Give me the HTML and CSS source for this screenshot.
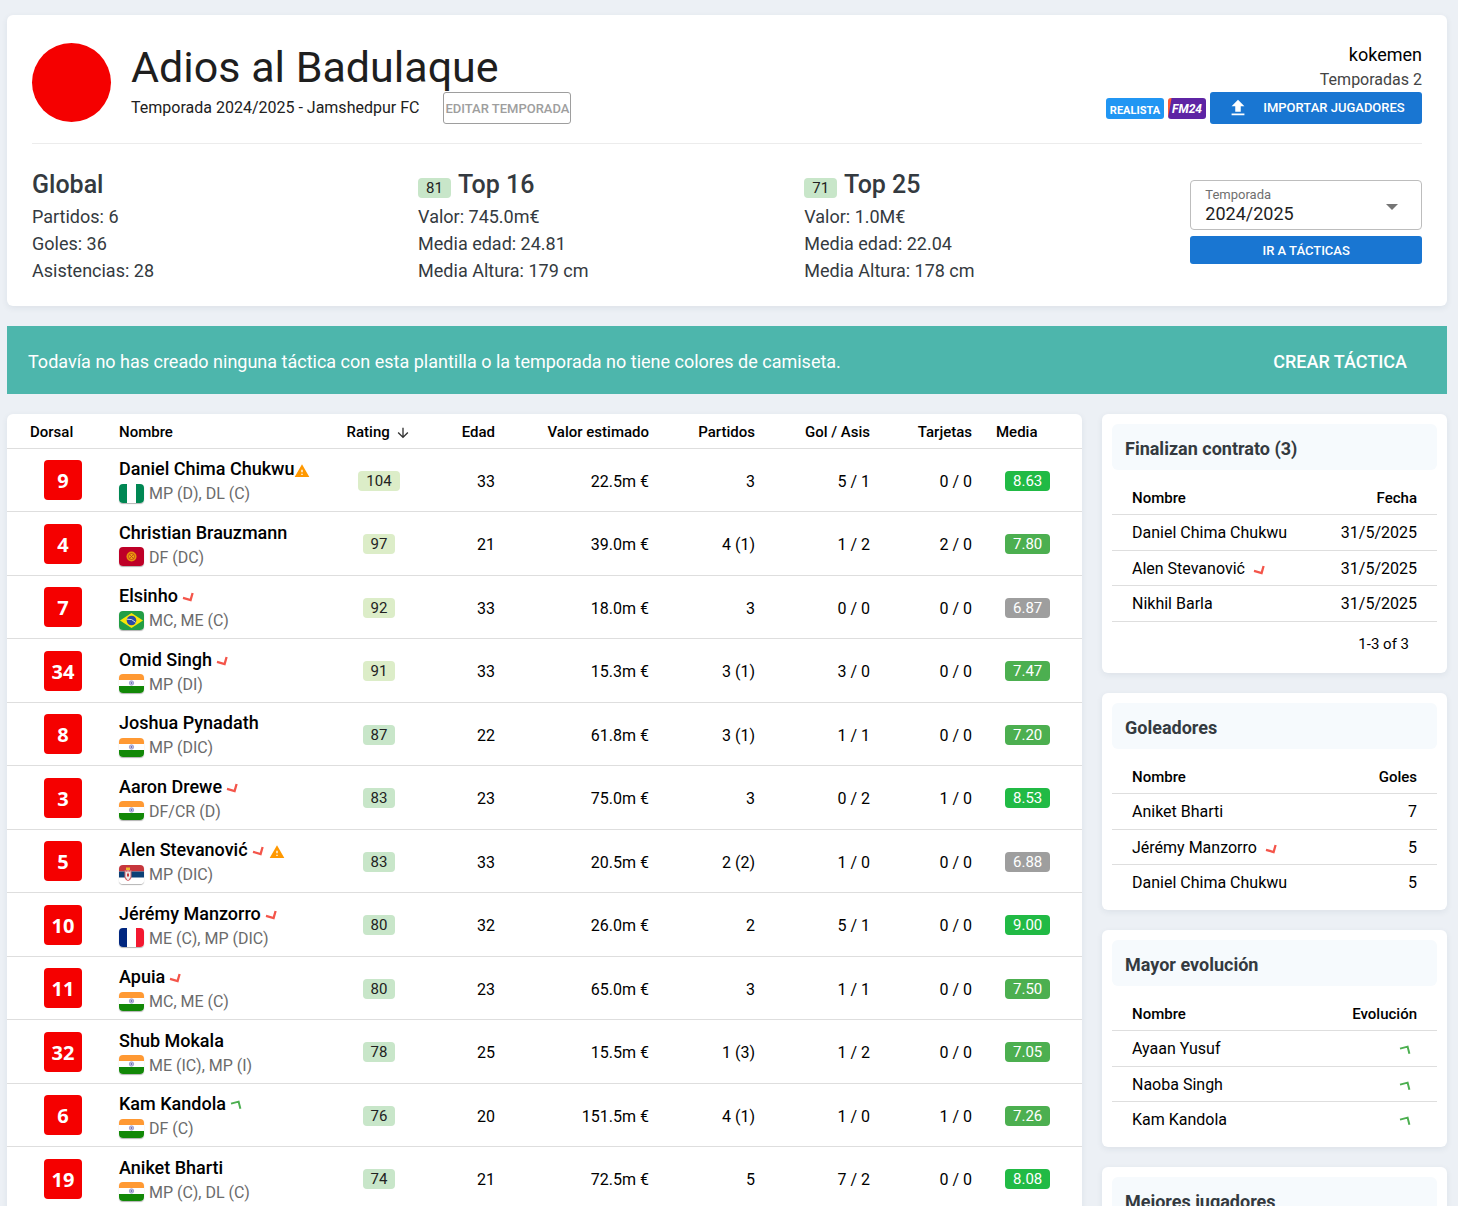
FILE: index.html
```html
<!DOCTYPE html>
<html lang="es">
<head>
<meta charset="utf-8">
<meta name="viewport" content="width=device-width, initial-scale=1">
<title>Adios al Badulaque</title>
<link rel="stylesheet" href="styles.css">
</head>
<body>
<svg class="sprite" aria-hidden="true">
  <symbol id="down" viewBox="0 0 12 12"><path d="M1 6.800l7.600 2.200L10.600 2" fill="none" stroke="#f4554a" stroke-width="2.300"/></symbol>
  <symbol id="up" viewBox="0 0 12 12"><path d="M1 4.600l7.600-2L10.400 9.800" fill="none" stroke="#4caf50" stroke-width="2"/></symbol>
  <symbol id="warn" viewBox="0 0 24 24"><path d="M1 21h22L12 2 1 21zm12-3h-2v-2h2v2zm0-4h-2v-4h2v4z" fill="#ff9800"/></symbol>
  <symbol id="ng" viewBox="0 0 25 19"><path fill="#fff" d="M0 0h25v19H0z"/><path fill="#008753" d="M0 0h8v19H0zM17 0h8v19h-8z"/></symbol>
  <symbol id="fr" viewBox="0 0 25 19"><path fill="#fff" d="M0 0h25v19H0z"/><path fill="#00267f" d="M0 0h8v19H0z"/><path fill="#f31830" d="M17 0h8v19h-8z"/></symbol>
  <symbol id="in" viewBox="0 0 25 19"><path fill="#fff" d="M0 0h25v19H0z"/><path fill="#ff9933" d="M0 0h25v6H0z"/><path fill="#128807" d="M0 12h25v7H0z"/><circle cx="12.500" cy="9" r="2.200" fill="#c5c5e6" stroke="#8888c4" stroke-width=".7"/><circle cx="12.500" cy="9" r=".8" fill="#4a4a9c"/></symbol>
  <symbol id="kg" viewBox="0 0 25 19"><path fill="#be0027" d="M0 0h25v19H0z"/><circle cx="12.500" cy="9.500" r="5" fill="#e8920c"/><circle cx="12.500" cy="9.500" r="3" fill="#f0a810" stroke="#be3a1a" stroke-width=".8"/><path d="M10.500 7.500l4 4m0-4l-4 4" stroke="#be3a1a" stroke-width=".8"/></symbol>
  <symbol id="br" viewBox="0 0 25 19"><path fill="#229e45" d="M0 0h25v19H0z"/><path fill="#f8e509" d="M12.500 2L24 9.500 12.500 17 1 9.500z"/><circle cx="12.500" cy="9.500" r="4.800" fill="#2b49a3"/><path d="M8 8.200q5-.8 8.600 3.200" fill="none" stroke="#dfe6f2" stroke-width=".9"/></symbol>
  <symbol id="rs" viewBox="0 0 25 19"><path fill="#fff" d="M0 0h25v19H0z"/><path fill="#c6363c" d="M0 0h25v6.500H0z"/><path fill="#0c4076" d="M0 6.500h25v6H0z"/><path fill="#d4646a" d="M5.500 5h7v6.500q0 3-3.500 4.500-3.500-1.500-3.500-4.500z"/><path fill="#edb92e" d="M7 2.500h4V5H7z"/><path fill="#eee" d="M6.500 6l2 1.500V5.500h1v2l2-1.500v6L9.500 15h-1l-2-3z"/><path fill="#c6363c" d="M8 8.500h2v3H8z"/></symbol>
</svg>

<main class="page">
  <header class="card club">
    <div class="club-top">
      <div class="crest"></div>
      <div class="club-name">
        <h1>Adios al Badulaque</h1>
        <div class="season-line">
          <span class="season">Temporada 2024/2025 - Jamshedpur FC</span>
          <button class="btn btn-outline" type="button">EDITAR TEMPORADA</button>
        </div>
      </div>
      <div class="owner">
        <a class="owner-name" href="#">kokemen</a>
        <span class="owner-seasons">Temporadas 2</span>
        <div class="owner-actions">
          <span class="tag">REALISTA</span>
          <span class="tag tag-fm">FM24</span>
          <button class="btn btn-primary btn-import" type="button">
            <svg viewBox="0 0 24 24" width="22" height="22" aria-hidden="true"><path fill="#fff" d="M9 16v-6H5l7-7 7 7h-4v6H9m-4 4v-2h14v2H5z"/></svg>
            IMPORTAR JUGADORES
          </button>
        </div>
      </div>
    </div>
    <div class="stats">
      <section><h2>Global</h2><p>Partidos: 6</p><p>Goles: 36</p><p>Asistencias: 28</p></section>
      <section><h2><span class="pill good">81</span>Top 16</h2><p>Valor: 745.0m€</p><p>Media edad: 24.81</p><p>Media Altura: 179 cm</p></section>
      <section><h2><span class="pill good">71</span>Top 25</h2><p>Valor: 1.0M€</p><p>Media edad: 22.04</p><p>Media Altura: 178 cm</p></section>
      <div class="controls">
        <div class="field">
          <label for="season">Temporada</label>
          <select id="season"><option>2024/2025</option></select>
          <svg class="caret" viewBox="0 0 12 6" aria-hidden="true"><path d="M0 0h12L6 6z" fill="#757575"/></svg>
        </div>
        <button class="btn btn-primary btn-tactics" type="button">IR A TÁCTICAS</button>
      </div>
    </div>
  </header>

  <div class="notice">
    <p>Todavía no has creado ninguna táctica con esta plantilla o la temporada no tiene colores de camiseta.</p>
    <a href="#">CREAR TÁCTICA</a>
  </div>

  <div class="columns">
    <div class="card squad">
      <table class="players">
        <colgroup><col class="c-dorsal"><col><col class="c-rating"><col class="c-edad"><col class="c-valor"><col class="c-partidos"><col class="c-gol"><col class="c-tarjetas"><col class="c-media"></colgroup>
        <thead><tr><th class="dorsal">Dorsal</th><th>Nombre</th><th class="rating">Rating <svg class="sort" viewBox="0 0 24 24" aria-hidden="true"><path fill="#333" d="M20 12l-1.410-1.410L13 16.170V4h-2v12.170l-5.580-5.590L4 12l8 8 8-8z"/></svg></th><th class="num">Edad</th><th class="num">Valor estimado</th><th class="num">Partidos</th><th class="num">Gol / Asis</th><th class="num">Tarjetas</th><th>Media</th></tr></thead>
        <tbody>
          <tr><td class="dorsal"><span class="shirt">9</span></td><td class="player"><div class="name">Daniel Chima Chukwu<svg class="warn"><use href="#warn"/></svg></div><div class="pos"><svg class="flag"><use href="#ng"/></svg>MP (D), DL (C)</div></td><td class="rating"><span class="pill high">104</span></td><td class="num">33</td><td class="num">22.5m €</td><td class="num">3</td><td class="num">5 / 1</td><td class="num">0 / 0</td><td class="media"><span class="pill top">8.63</span></td></tr>
          <tr><td class="dorsal"><span class="shirt">4</span></td><td class="player"><div class="name">Christian Brauzmann</div><div class="pos"><svg class="flag"><use href="#kg"/></svg>DF (DC)</div></td><td class="rating"><span class="pill high">97</span></td><td class="num">21</td><td class="num">39.0m €</td><td class="num">4 (1)</td><td class="num">1 / 2</td><td class="num">2 / 0</td><td class="media"><span class="pill fine">7.80</span></td></tr>
          <tr><td class="dorsal"><span class="shirt">7</span></td><td class="player"><div class="name">Elsinho<svg class="trend"><use href="#down"/></svg></div><div class="pos"><svg class="flag"><use href="#br"/></svg>MC, ME (C)</div></td><td class="rating"><span class="pill high">92</span></td><td class="num">33</td><td class="num">18.0m €</td><td class="num">3</td><td class="num">0 / 0</td><td class="num">0 / 0</td><td class="media"><span class="pill poor">6.87</span></td></tr>
          <tr><td class="dorsal"><span class="shirt">34</span></td><td class="player"><div class="name">Omid Singh<svg class="trend"><use href="#down"/></svg></div><div class="pos"><svg class="flag"><use href="#in"/></svg>MP (DI)</div></td><td class="rating"><span class="pill high">91</span></td><td class="num">33</td><td class="num">15.3m €</td><td class="num">3 (1)</td><td class="num">3 / 0</td><td class="num">0 / 0</td><td class="media"><span class="pill fine">7.47</span></td></tr>
          <tr><td class="dorsal"><span class="shirt">8</span></td><td class="player"><div class="name">Joshua Pynadath</div><div class="pos"><svg class="flag"><use href="#in"/></svg>MP (DIC)</div></td><td class="rating"><span class="pill good">87</span></td><td class="num">22</td><td class="num">61.8m €</td><td class="num">3 (1)</td><td class="num">1 / 1</td><td class="num">0 / 0</td><td class="media"><span class="pill fine">7.20</span></td></tr>
          <tr><td class="dorsal"><span class="shirt">3</span></td><td class="player"><div class="name">Aaron Drewe<svg class="trend"><use href="#down"/></svg></div><div class="pos"><svg class="flag"><use href="#in"/></svg>DF/CR (D)</div></td><td class="rating"><span class="pill good">83</span></td><td class="num">23</td><td class="num">75.0m €</td><td class="num">3</td><td class="num">0 / 2</td><td class="num">1 / 0</td><td class="media"><span class="pill top">8.53</span></td></tr>
          <tr><td class="dorsal"><span class="shirt">5</span></td><td class="player"><div class="name">Alen Stevanović<svg class="trend"><use href="#down"/></svg><svg class="warn after"><use href="#warn"/></svg></div><div class="pos"><svg class="flag"><use href="#rs"/></svg>MP (DIC)</div></td><td class="rating"><span class="pill good">83</span></td><td class="num">33</td><td class="num">20.5m €</td><td class="num">2 (2)</td><td class="num">1 / 0</td><td class="num">0 / 0</td><td class="media"><span class="pill poor">6.88</span></td></tr>
          <tr><td class="dorsal"><span class="shirt">10</span></td><td class="player"><div class="name">Jérémy Manzorro<svg class="trend"><use href="#down"/></svg></div><div class="pos"><svg class="flag"><use href="#fr"/></svg>ME (C), MP (DIC)</div></td><td class="rating"><span class="pill good">80</span></td><td class="num">32</td><td class="num">26.0m €</td><td class="num">2</td><td class="num">5 / 1</td><td class="num">0 / 0</td><td class="media"><span class="pill top">9.00</span></td></tr>
          <tr><td class="dorsal"><span class="shirt">11</span></td><td class="player"><div class="name">Apuia<svg class="trend"><use href="#down"/></svg></div><div class="pos"><svg class="flag"><use href="#in"/></svg>MC, ME (C)</div></td><td class="rating"><span class="pill good">80</span></td><td class="num">23</td><td class="num">65.0m €</td><td class="num">3</td><td class="num">1 / 1</td><td class="num">0 / 0</td><td class="media"><span class="pill fine">7.50</span></td></tr>
          <tr><td class="dorsal"><span class="shirt">32</span></td><td class="player"><div class="name">Shub Mokala</div><div class="pos"><svg class="flag"><use href="#in"/></svg>ME (IC), MP (I)</div></td><td class="rating"><span class="pill good">78</span></td><td class="num">25</td><td class="num">15.5m €</td><td class="num">1 (3)</td><td class="num">1 / 2</td><td class="num">0 / 0</td><td class="media"><span class="pill fine">7.05</span></td></tr>
          <tr><td class="dorsal"><span class="shirt">6</span></td><td class="player"><div class="name">Kam Kandola<svg class="trend"><use href="#up"/></svg></div><div class="pos"><svg class="flag"><use href="#in"/></svg>DF (C)</div></td><td class="rating"><span class="pill good">76</span></td><td class="num">20</td><td class="num">151.5m €</td><td class="num">4 (1)</td><td class="num">1 / 0</td><td class="num">1 / 0</td><td class="media"><span class="pill fine">7.26</span></td></tr>
          <tr><td class="dorsal"><span class="shirt">19</span></td><td class="player"><div class="name">Aniket Bharti</div><div class="pos"><svg class="flag"><use href="#in"/></svg>MP (C), DL (C)</div></td><td class="rating"><span class="pill good">74</span></td><td class="num">21</td><td class="num">72.5m €</td><td class="num">5</td><td class="num">7 / 2</td><td class="num">0 / 0</td><td class="media"><span class="pill top">8.08</span></td></tr>
        </tbody>
      </table>
    </div>

    <aside class="side">
      <section class="card panel">
        <h3>Finalizan contrato (3)</h3>
        <table class="mini paged">
          <thead><tr><th>Nombre</th><th class="num">Fecha</th></tr></thead>
          <tbody>
            <tr><td>Daniel Chima Chukwu</td><td class="num">31/5/2025</td></tr>
            <tr><td>Alen Stevanović<svg class="trend"><use href="#down"/></svg></td><td class="num">31/5/2025</td></tr>
            <tr><td>Nikhil Barla</td><td class="num">31/5/2025</td></tr>
          </tbody>
        </table>
        <p class="pager">1-3 of 3</p>
      </section>
      <section class="card panel">
        <h3>Goleadores</h3>
        <table class="mini">
          <thead><tr><th>Nombre</th><th class="num">Goles</th></tr></thead>
          <tbody>
            <tr><td>Aniket Bharti</td><td class="num">7</td></tr>
            <tr><td>Jérémy Manzorro<svg class="trend"><use href="#down"/></svg></td><td class="num">5</td></tr>
            <tr><td>Daniel Chima Chukwu</td><td class="num">5</td></tr>
          </tbody>
        </table>
      </section>
      <section class="card panel">
        <h3>Mayor evolución</h3>
        <table class="mini evolution">
          <thead><tr><th>Nombre</th><th class="num">Evolución</th></tr></thead>
          <tbody>
            <tr><td>Ayaan Yusuf</td><td class="num"><svg class="trend"><use href="#up"/></svg></td></tr>
            <tr><td>Naoba Singh</td><td class="num"><svg class="trend"><use href="#up"/></svg></td></tr>
            <tr><td>Kam Kandola</td><td class="num"><svg class="trend"><use href="#up"/></svg></td></tr>
          </tbody>
        </table>
      </section>
      <section class="card panel">
        <h3>Mejores jugadores</h3>
      </section>
    </aside>
  </div>
</main>
</body>
</html>
```

FILE: styles.css
```css
* { box-sizing: border-box; }
html { height: 100%; overflow: hidden; }
body {
  margin: 0;
  height: 100%;
  overflow: hidden;
  background: #ecf0f5;
  color: #000;
  font: 16px/24px Roboto, "Liberation Sans", sans-serif;
}
h1, h2, h3, p { margin: 0; }
a { color: inherit; text-decoration: none; }
.sprite { display: none; }
.page {
  display: flex;
  flex-direction: column;
  gap: 20px;
  padding: 15px 11px 0 7px;
}
.card {
  background: #fff;
  border-radius: 6px;
  box-shadow: 0 2px 6px rgba(40, 60, 90, .08);
}

/* Club header */
.club { padding: 28px 25px 22px; }
.club-top {
  display: flex;
  gap: 20px;
  padding-bottom: 19px;
  border-bottom: 1px solid #ececec;
}
.crest { width: 79px; height: 79px; border-radius: 50%; background: #f50000; }
.club-name { flex: 1; }
h1 { color: #1e1e1e; font-size: 43px; font-weight: 400; line-height: 49px; }
.season-line { display: flex; align-items: center; gap: 24px; color: #212121; }
.season { line-height: 30px; }
.btn {
  display: flex;
  align-items: center;
  justify-content: center;
  border: 0;
  border-radius: 3px;
  font: 500 13px/20px Roboto, "Liberation Sans", sans-serif;
}
.btn-outline {
  height: 32px;
  padding: 2px 1px 0;
  background: transparent;
  border: 1px solid #9e9e9e;
  color: #9e9e9e;
}
.btn-primary { background: #1976d2; color: #fff; }
.owner { display: flex; flex-direction: column; align-items: flex-end; }
.owner-name { font-size: 18px; }
.owner-seasons { color: #444; line-height: 25px; }
.owner-actions { display: flex; align-items: center; gap: 4px; }
.btn-import { height: 32px; width: 212px; gap: 14px; }
.tag {
  height: 21px;
  padding: 3px 4px 0;
  border-radius: 3px;
  background: #2196f3;
  color: #fff;
  font-size: 11px;
  font-weight: 700;
  line-height: 20px;
}
.tag-fm {
  padding-top: 1px;
  background: linear-gradient(100deg, #ff5a36 3px, #5e24a4 4px);
  font-size: 12px;
  font-style: italic;
}

.stats { display: flex; justify-content: space-between; padding-top: 23px; }
.stats > * { flex: 0 0 calc(100% / 6); }
h2 {
  display: flex;
  align-items: center;
  gap: 7px;
  height: 36px;
  color: #343a40;
  font-size: 25px;
  font-weight: 500;
  line-height: 36px;
}
h2 .pill { margin-top: 5px; font-weight: 400; }
.stats p { color: #343a40; font-size: 18px; line-height: 27px; }
.controls { display: flex; flex-direction: column; gap: 6px; padding-top: 13px; }
.field {
  position: relative;
  display: flex;
  flex-direction: column;
  height: 50px;
  border: 1px solid #bdbdbd;
  border-radius: 4px;
}
.field label {
  padding: 4px 14px 0;
  color: #6f6f6f;
  font-size: 13px;
  line-height: 20px;
  pointer-events: none;
}
.field select {
  appearance: none;
  height: 18px;
  padding: 0 14px;
  border: 0;
  background: none;
  color: #1e1e1e;
  font: 18px/18px Roboto, "Liberation Sans", sans-serif;
}
.caret { position: absolute; right: 23px; top: 23px; width: 12px; height: 6px; }
.btn-tactics { height: 28px; padding-top: 2px; }

/* Notice bar */
.notice {
  display: flex;
  justify-content: space-between;
  align-items: center;
  padding: 4px 40px 0 21px;
  height: 68px;
  background: #4db6ac;
  color: #fff;
  font-size: 18px;
}
.notice a { font-weight: 500; }

/* Squad table */
.columns { display: grid; grid-template-columns: minmax(0, 1fr) 345px; gap: 20px; align-items: start; }
table { width: 100%; border-collapse: separate; border-spacing: 0; table-layout: fixed; }
th { font-size: 15px; font-weight: 500; text-align: left; }
th, td { padding: 0 12px; border-bottom: 1px solid #dedede; white-space: nowrap; }
.num { text-align: right; }
.c-dorsal { width: 100px; }
.c-rating { width: 80px; }
.c-edad { width: 88px; }
.c-valor { width: 154px; }
.c-partidos { width: 106px; }
.c-gol { width: 115px; }
.c-tarjetas { width: 102px; }
.c-media { width: 98px; }
.players th { height: 35px; padding-top: 2px; }
.players td { height: 63px; }
.players tr:nth-child(even) td { height: 64px; }
.players th.dorsal { padding-left: 23px; }
.players td.dorsal { padding-left: 37px; }
.players td.num { padding-top: 3px; }
.players td.player { padding-top: 2px; }
.players .rating { padding-left: 0; padding-right: 0; text-align: center; }
.players td.media { padding-left: 21px; }
.sort { width: 16px; height: 16px; margin-left: 2px; vertical-align: -4px; }
.shirt {
  display: block;
  width: 38px;
  height: 40px;
  border-radius: 4px;
  background: #f50000;
  color: #fff;
  font: 700 20px/42px "Open Sans", sans-serif;
  text-align: center;
}
.name { display: flex; align-items: center; font-size: 18px; font-weight: 500; line-height: 26px; }
.pos { display: flex; align-items: center; gap: 5px; color: #6b6b6b; line-height: 24px; }
.flag { width: 25px; height: 19px; margin-bottom: 2px; border-radius: 4px; box-shadow: 0 1px 1px rgba(0, 0, 0, .3); }
.trend { width: 12px; height: 12px; margin: 2px 0 0 4px; }
.warn { width: 16px; height: 16px; margin-top: 4px; }
.after { margin-left: 5px; }
.pill {
  display: inline-block;
  padding: 0 8px;
  border-radius: 4px;
  font-size: 15px;
  line-height: 20px;
  vertical-align: middle;
}
.good { background: #c8e6c9; color: #222; }
.high { background: #dcedc8; color: #222; }
.top { background: #21ba45; color: #fff; }
.fine { background: #4caf50; color: #fff; }
.poor { background: #9e9e9e; color: #fff; }

/* Sidebar */
.side { display: flex; flex-direction: column; gap: 20px; }
.panel { padding: 10px; }
h3 {
  padding: 4px 13px 0;
  border-radius: 6px;
  background: #f6fafd;
  color: #343a40;
  font-size: 18px;
  font-weight: 700;
  line-height: 42px;
}
.mini th { height: 45px; padding: 11px 20px 0; }
.mini td { height: 36px; padding: 1px 20px 0; }
.mini tr:nth-child(even) td { height: 35px; }
.mini tbody tr:last-child td { height: 35px; border-bottom: 0; }
.mini.paged tbody tr:last-child td { height: 36px; border-bottom: 1px solid #dedede; }
.mini td .trend { margin: 0 0 0 8px; vertical-align: -2px; }
.evolution td .trend { margin-right: 6px; }
.pager { padding: 10px 28px 7px; font-size: 15px; text-align: right; }
```
